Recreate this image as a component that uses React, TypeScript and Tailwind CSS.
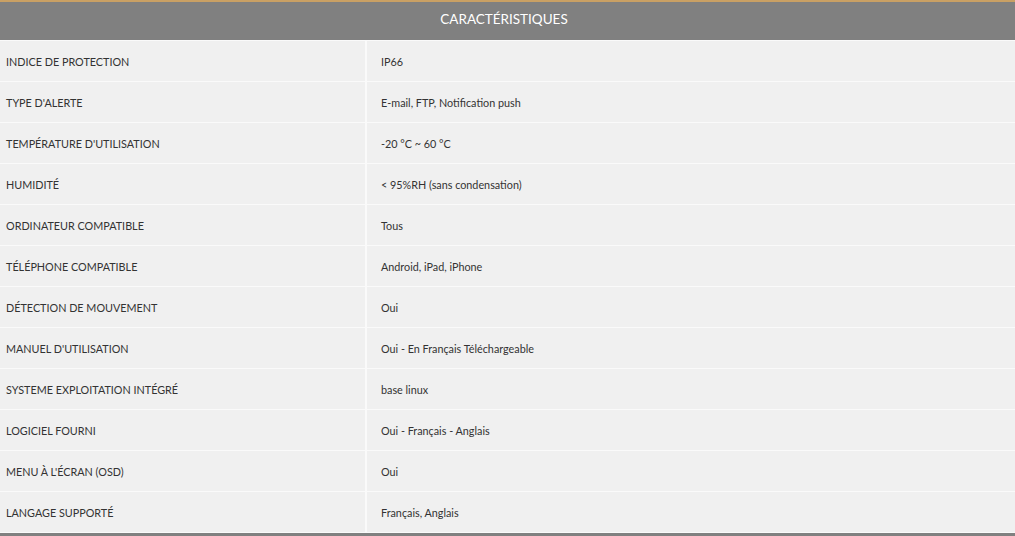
import React from "react";

const rows: [string, string][] = [
  ["INDICE DE PROTECTION", "IP66"],
  ["TYPE D'ALERTE", "E-mail, FTP, Notification push"],
  ["TEMPÉRATURE D'UTILISATION", "-20 °C ~ 60 °C"],
  ["HUMIDITÉ", "< 95%RH (sans condensation)"],
  ["ORDINATEUR COMPATIBLE", "Tous"],
  ["TÉLÉPHONE COMPATIBLE", "Android, iPad, iPhone"],
  ["DÉTECTION DE MOUVEMENT", "Oui"],
  ["MANUEL D'UTILISATION", "Oui - En Français Téléchargeable"],
  ["SYSTEME EXPLOITATION INTÉGRÉ", "base linux"],
  ["LOGICIEL FOURNI", "Oui - Français - Anglais"],
  ["MENU À L'ÉCRAN (OSD)", "Oui"],
  ["LANGAGE SUPPORTÉ", "Français, Anglais"],
];

export default function App() {
  return (
    <div
      className="w-[1015px] h-[536px] bg-[#f0f0f0] overflow-hidden"
      style={{ fontFamily: "Lato, 'Open Sans', sans-serif" }}
    >
      <div className="h-[40px] border-t-2 border-[#c9a064] bg-[#808080] flex items-center justify-center pb-[3px] pr-[7px] text-white text-[13.5px]">
        CARACTÉRISTIQUES
      </div>
      {rows.map(([k, v]) => (
        <div key={k} className="flex h-[41px] border-t border-[#fafafa] text-[10.8px] text-[#333]">
          <div className="w-[367px] flex items-center pl-[6px] pt-[2px] border-r-2 border-[#fafafa]">{k}</div>
          <div className="flex-1 flex items-center pl-[14px] pt-[2px]">{v}</div>
        </div>
      ))}
      <div className="border-t border-[#fafafa] h-[1px]" />
      <div className="h-[3px] bg-[#808080]" />
    </div>
  );
}
